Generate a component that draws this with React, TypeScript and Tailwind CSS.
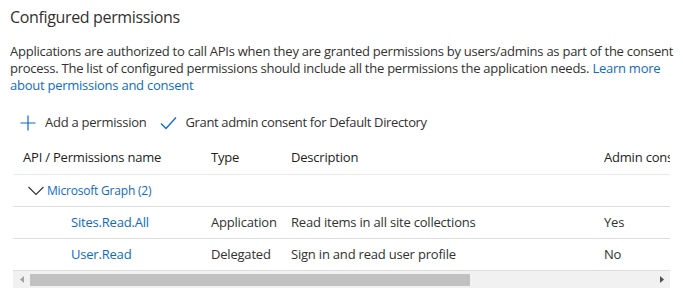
import React from 'react';

const rows = [
    { name: 'Sites.Read.All', type: 'Application', desc: 'Read items in all site collections', admin: 'Yes' },
    { name: 'User.Read', type: 'Delegated', desc: 'Sign in and read user profile', admin: 'No' },
];

const cols = 'grid grid-cols-[188px_80px_313px_120px]';

const App: React.FC = () => {
    return (
        <div className="w-[683px] h-[305px] bg-white text-[#323130] font-['Open_Sans',sans-serif] text-[13px] overflow-hidden">
            <h1 className="pl-[10px] pt-[5px] text-[16px] leading-[24px] tracking-[-0.35px]">Configured permissions</h1>
            <p className="pl-[10px] mt-[14px] leading-[17px] tracking-[-0.25px] text-[13px] whitespace-nowrap">
                Applications are authorized to call APIs when they are granted permissions by users/admins as part of the consent
                <br />
                process. The list of configured permissions should include all the permissions the application needs.{' '}
                <a className="text-[#0e6bc4]">Learn more</a>
                <br />
                <a className="text-[#0e6bc4]">about permissions and consent</a>
            </p>

            <div className="flex items-center h-[32px] mt-[13px] pl-[20px] tracking-[-0.25px]">
                <svg width="16" height="16" viewBox="0 0 16 16" className="text-[#0e6bc4]">
                    <path d="M8 0.5v15M0.5 8h15" stroke="currentColor" strokeWidth="1.2" fill="none" />
                </svg>
                <span className="ml-[9px]">Add a permission</span>
                <svg width="17" height="14" viewBox="0 0 17 14" className="ml-[14px] text-[#0e6bc4]">
                    <path d="M1 7.5l5 5L16 1.5" stroke="currentColor" strokeWidth="1.3" fill="none" />
                </svg>
                <span className="ml-[8px] tracking-[-0.35px]">Grant admin consent for Default Directory</span>
            </div>

            <div className="ml-[13px] w-[657px] overflow-hidden mt-[2px] tracking-[-0.2px]">
                <div className="w-[720px]">
                    <div className={`${cols} h-[34px] items-center border-b border-[#edebe9] text-[#201f1e]`}>
                        <div className="pl-[10px]">API / Permissions name</div>
                        <div className="pl-[10px]">Type</div>
                        <div className="pl-[10px]">Description</div>
                        <div className="pl-[10px] whitespace-nowrap">Admin consent required</div>
                    </div>
                    <div className="flex items-center h-[32px] border-b border-[#e1dfdd] pl-[15px] text-[12px] text-[#0e6bc4]">
                        <svg width="16" height="10" viewBox="0 0 16 10" className="text-[#323130]">
                            <path d="M0.5 1l7.5 7.5L15.5 1" stroke="currentColor" strokeWidth="1.1" fill="none" />
                        </svg>
                        <span className="ml-[3px]">Microsoft Graph (2)</span>
                    </div>
                    {rows.map((r) => (
                        <div key={r.name} className={`${cols} h-[32px] items-center border-b border-[#e1dfdd]`}>
                            <div className="pl-[58px] text-[#0e6bc4]">{r.name}</div>
                            <div className="pl-[10px]">{r.type}</div>
                            <div className="pl-[10px]">{r.desc}</div>
                            <div className="pl-[10px]">{r.admin}</div>
                        </div>
                    ))}
                </div>
                <div className="flex items-center h-[17px] bg-[#f1f1f1]">
                    <div className="w-[17px] flex justify-center">
                        <svg width="4" height="7" viewBox="0 0 4 7"><path d="M4 0v7L0 3.5z" fill="#a3a3a3" /></svg>
                    </div>
                    <div className="w-[440px] h-[12px] bg-[#c1c1c1]" />
                    <div className="flex-1" />
                    <div className="w-[17px] flex justify-center">
                        <svg width="4" height="7" viewBox="0 0 4 7"><path d="M0 0v7L4 3.5z" fill="#505050" /></svg>
                    </div>
                </div>
            </div>
        </div>
    );
};

export default App;
